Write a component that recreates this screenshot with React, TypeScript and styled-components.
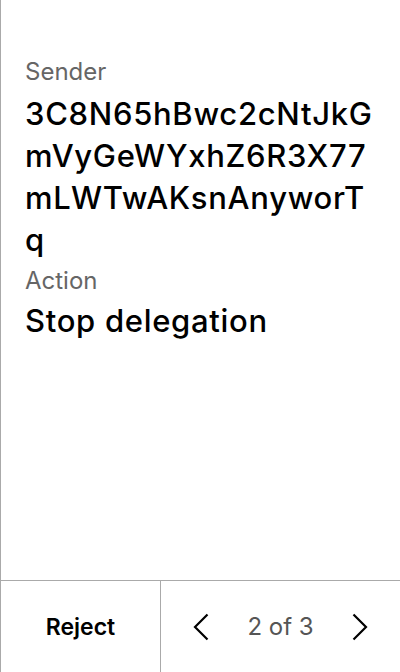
import React from "react";
import styled, { createGlobalStyle } from "styled-components";

const Global = createGlobalStyle`
  html, body { margin: 0; padding: 0; background: #fff; }
  body { font-family: Inter, "Noto Sans", "Liberation Sans", sans-serif; }
  * { box-sizing: border-box; }
`;

const Screen = styled.div`
  width: 400px;
  height: 672px;
  display: flex;
  flex-direction: column;
  border-left: 1px solid #aaaaaa;
  background: #fff;
`;

const Content = styled.div`
  flex: 1;
  padding: 57px 24px 0 24px;
  display: flex;
  flex-direction: column;
`;

const Label = styled.div<{ $gap: number }>`
  font-size: 24px;
  line-height: 30px;
  color: #666666;
  margin-bottom: ${(p) => p.$gap}px;
`;

const Value = styled.div`
  font-size: 31px;
  font-weight: 500;
  line-height: 42px;
  letter-spacing: 0.7px;
  color: #000;
  word-break: break-all;
  margin-bottom: 5px;
`;

const Footer = styled.div`
  height: 92px;
  border-top: 1px solid #aaaaaa;
  display: flex;
`;

const RejectButton = styled.button`
  width: 160px;
  border: none;
  border-right: 1px solid #aaaaaa;
  background: transparent;
  font-family: inherit;
  font-size: 23px;
  font-weight: 600;
  color: #000;
  padding: 0;
`;

const Pager = styled.div`
  flex: 1;
  display: flex;
  align-items: center;
  justify-content: space-between;
  padding: 0 32px;
`;

const NavButton = styled.button`
  width: 16px;
  height: 28px;
  border: none;
  background: transparent;
  padding: 0;
  display: flex;
  align-items: center;
  justify-content: center;
`;

const Count = styled.span`
  font-size: 24px;
  color: #555555;
`;

const Chevron = ({ dir }: { dir: "left" | "right" }) => (
  <svg width="16" height="28" viewBox="0 0 16 28" fill="none">
    <polyline
      points={dir === "left" ? "14.5,1.5 2,14 14.5,26.5" : "1.5,1.5 14,14 1.5,26.5"}
      stroke="#000"
      strokeWidth="2.2"
      strokeLinecap="butt"
      strokeLinejoin="miter"
    />
  </svg>
);

export default function App() {
  return (
    <>
      <Global />
      <Screen>
        <Content>
          <Label $gap={6}>Sender</Label>
          <Value>3C8N65hBwc2cNtJkGmVyGeWYxhZ6R3X77mLWTwAKsnAnyworTq</Value>
          <Label $gap={4}>Action</Label>
          <Value>Stop delegation</Value>
        </Content>
        <Footer>
          <RejectButton>Reject</RejectButton>
          <Pager>
            <NavButton aria-label="Previous">
              <Chevron dir="left" />
            </NavButton>
            <Count>2 of 3</Count>
            <NavButton aria-label="Next">
              <Chevron dir="right" />
            </NavButton>
          </Pager>
        </Footer>
      </Screen>
    </>
  );
}
